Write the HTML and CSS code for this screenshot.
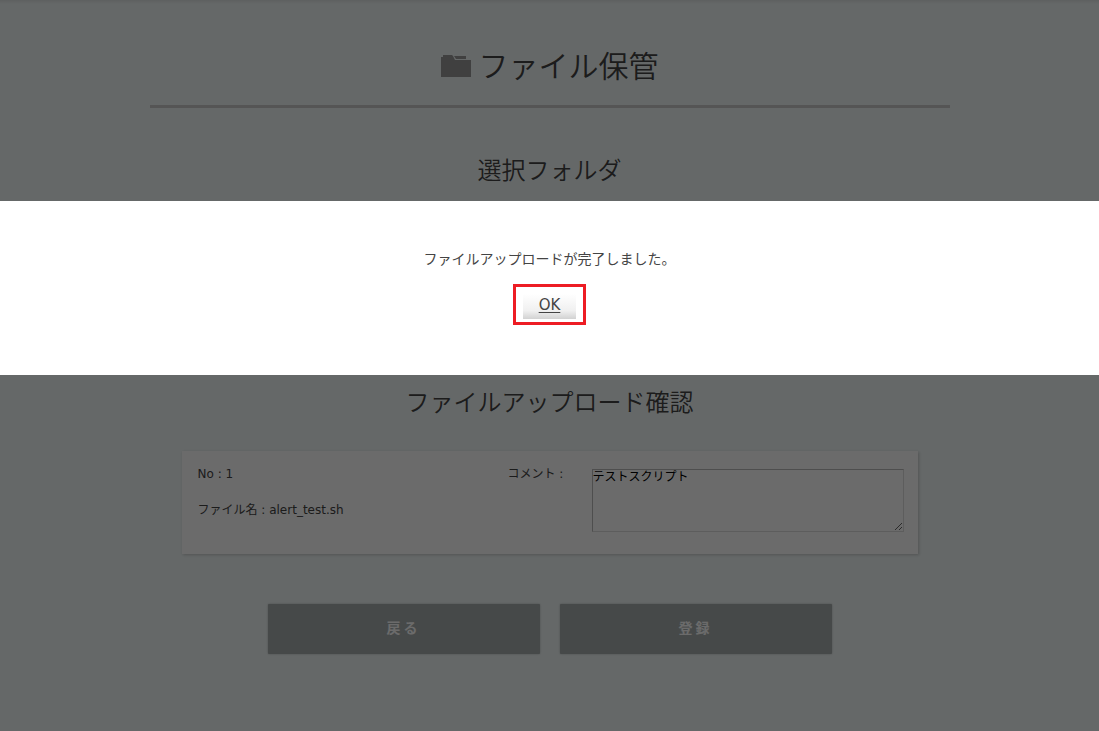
FILE: index.html
```html
<!DOCTYPE html>
<html lang="ja">
<head>
  <meta charset="UTF-8">
  <title>ファイル保管</title>
  <link rel="stylesheet" href="styles.css">
</head>
<body>

<main class="container">
  <h1 class="page-title">
    <svg class="folder" viewBox="0 0 30 24" aria-hidden="true">
      <path d="M0 2h2V0h9l1 1 2 4h16v17H0z"/>
      <path d="M13 1h12v3H15z"/>
    </svg>
    ファイル保管
  </h1>

  <section class="folder-section">
    <h2>選択フォルダ</h2>
  </section>

  <form class="upload-form">
    <h2>ファイルアップロード確認</h2>

    <div class="card">
      <div class="file-info">
        <p>No : 1</p>
        <p>ファイル名 : alert_test.sh</p>
      </div>
      <label for="comment">コメント :</label>
      <textarea id="comment">テストスクリプト</textarea>
    </div>

    <div class="buttons">
      <button type="button">戻る</button>
      <button type="submit">登録</button>
    </div>
  </form>
</main>

<div class="overlay">
  <div class="modal" role="dialog" aria-modal="true">
    <p>ファイルアップロードが完了しました。</p>
    <div class="ok-frame">
      <a class="ok" href="#">OK</a>
    </div>
  </div>
</div>

</body>
</html>
```

FILE: styles.css
```css
* {
  box-sizing: border-box;
}
body {
  margin: 0;
  background: #f1f8f8 linear-gradient(#dfe5e5, #f1f8f8 4px) no-repeat;
  color: #444;
  font-family: "DejaVu Sans", "Noto Sans CJK JP", sans-serif;
  font-size: 12px;
  line-height: 20px;
}
h1, h2, p {
  margin: 0;
}
h1, h2 {
  font-weight: 350;
}
.container {
  max-width: 800px;
  margin: 0 auto;
}
.page-title {
  display: flex;
  justify-content: center;
  align-items: center;
  gap: 8px;
  padding: 45px 0 16px;
  border-bottom: 3px solid #cacaca;
  font-size: 30px;
  line-height: 44px;
}
.folder {
  width: 30px;
  height: 24px;
  fill: #999;
}
h2 {
  font-size: 24px;
  line-height: 36px;
  text-align: center;
}
.folder-section {
  min-height: 232px;
  padding-top: 45px;
}
.upload-form {
  padding: 45px 0 60px;
}
.card {
  display: flex;
  align-items: flex-start;
  width: 92%;
  margin: 30px auto 50px;
  padding: 13px 14px 22px 16px;
  background: #fff;
  box-shadow: 1px 1px 3px rgba(0, 0, 0, 0.2);
}
.file-info {
  display: flex;
  flex: 1;
  flex-direction: column;
  gap: 16px;
}
.card label {
  width: 84px;
}
.card textarea {
  width: 312px;
  height: 63px;
  margin-top: 5px;
  padding: 0;
  border: 1px solid #ddd;
  border-top-color: #bbb;
  border-left-color: #bbb;
  background: #fff;
  color: #000;
  font: inherit;
  line-height: 14px;
}
.buttons {
  display: flex;
  justify-content: center;
  gap: 20px;
}
.buttons button {
  width: 34%;
  height: 50px;
  padding: 0 0 2px;
  border: 0;
  border-radius: 1px;
  background: #a8afaf;
  box-shadow: 0 0 2px rgba(0, 0, 0, 0.3);
  color: #fff;
  font: inherit;
  font-size: 14px;
  font-weight: bold;
  letter-spacing: 3px;
}
/* dialog */
.overlay {
  position: fixed;
  inset: 0;
  padding-top: 201px;
  background: rgba(0, 0, 0, 0.58);
}
.modal {
  display: flex;
  flex-direction: column;
  align-items: center;
  gap: 15px;
  padding: 48px 0 50px;
  background: #fff;
  font-size: 14px;
}
.ok-frame {
  padding: 4px 7px 3px;
  border: 3px solid #ed1c24;
}
.ok {
  display: block;
  padding: 4px 16px;
  background: linear-gradient(#fff 10%, #f0f0f0 70%, #d2d2d2);
  color: #444;
  font-size: 15px;
  text-underline-offset: 2px;
}
```
